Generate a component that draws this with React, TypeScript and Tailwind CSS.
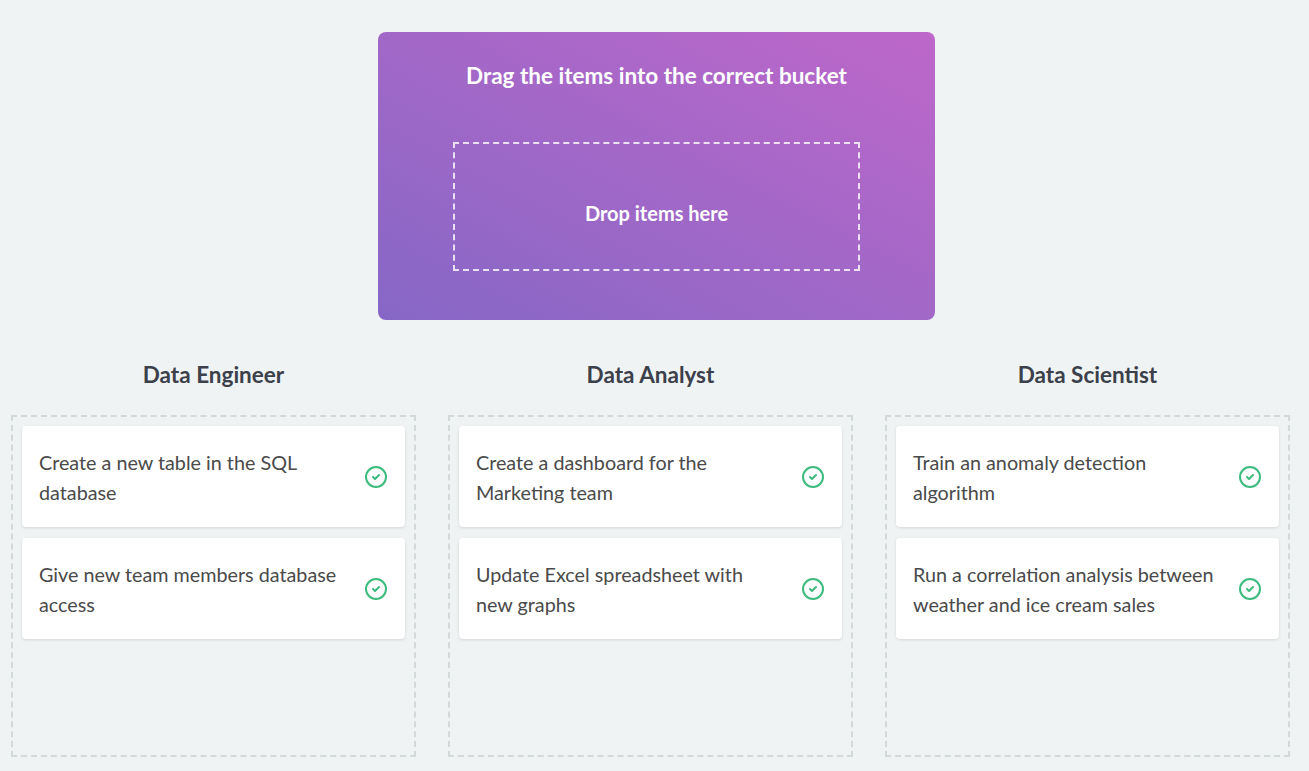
import React from "react";
import { CircleCheck } from "lucide-react";

const columns = [
  {
    title: "Data Engineer",
    items: ["Create a new table in the SQL database", "Give new team members database access"],
  },
  {
    title: "Data Analyst",
    items: ["Create a dashboard for the Marketing team", "Update Excel spreadsheet with new graphs"],
  },
  {
    title: "Data Scientist",
    items: ["Train an anomaly detection algorithm", "Run a correlation analysis between weather and ice cream sales"],
  },
];

export default function App() {
  return (
    <div
      className="w-[1309px] h-[771px] bg-[#f0f3f4] overflow-hidden"
      style={{ fontFamily: "Lato, 'Open Sans', sans-serif" }}
    >
      <div className="pt-[32px] pl-[378px]">
        <div className="w-[557px] h-[288px] rounded-lg bg-gradient-to-tr from-[#8667c6] to-[#bd67c9] flex flex-col items-center pt-[28px]">
          <div className="text-white font-bold text-[22.5px] leading-[32px]">Drag the items into the correct bucket</div>
          <div className="mt-[50px] w-[407px] h-[129px] border-2 border-dashed border-white/80 flex items-center justify-center pt-[12px]">
            <span className="text-white font-bold text-[20px] leading-[28px]">Drop items here</span>
          </div>
        </div>
      </div>
      <div className="flex gap-[32px] pl-[11px] mt-[39px]">
        {columns.map((col) => (
          <div key={col.title} className="w-[405px] flex flex-col">
            <div className="text-center font-bold text-[22.5px] leading-[32px] text-[#3b404a]">{col.title}</div>
            <div className="mt-[24px] h-[342px] border-2 border-dashed border-[#d3d8db] p-[9px] flex flex-col gap-[11px]">
              {col.items.map((it) => (
                <div
                  key={it}
                  className="h-[101px] bg-white rounded-[4px] shadow-[0_1px_3px_rgba(0,0,0,0.12)] flex items-center pl-[17px] pt-[2px]"
                >
                  <div className="w-[304px] text-[19.75px] leading-[30px] text-[#4a4a4a]">{it}</div>
                  <CircleCheck size={24} strokeWidth={2} color="#3dbb7c" className="ml-auto mr-[17px] -mt-[2px]" />
                </div>
              ))}
            </div>
          </div>
        ))}
      </div>
    </div>
  );
}
